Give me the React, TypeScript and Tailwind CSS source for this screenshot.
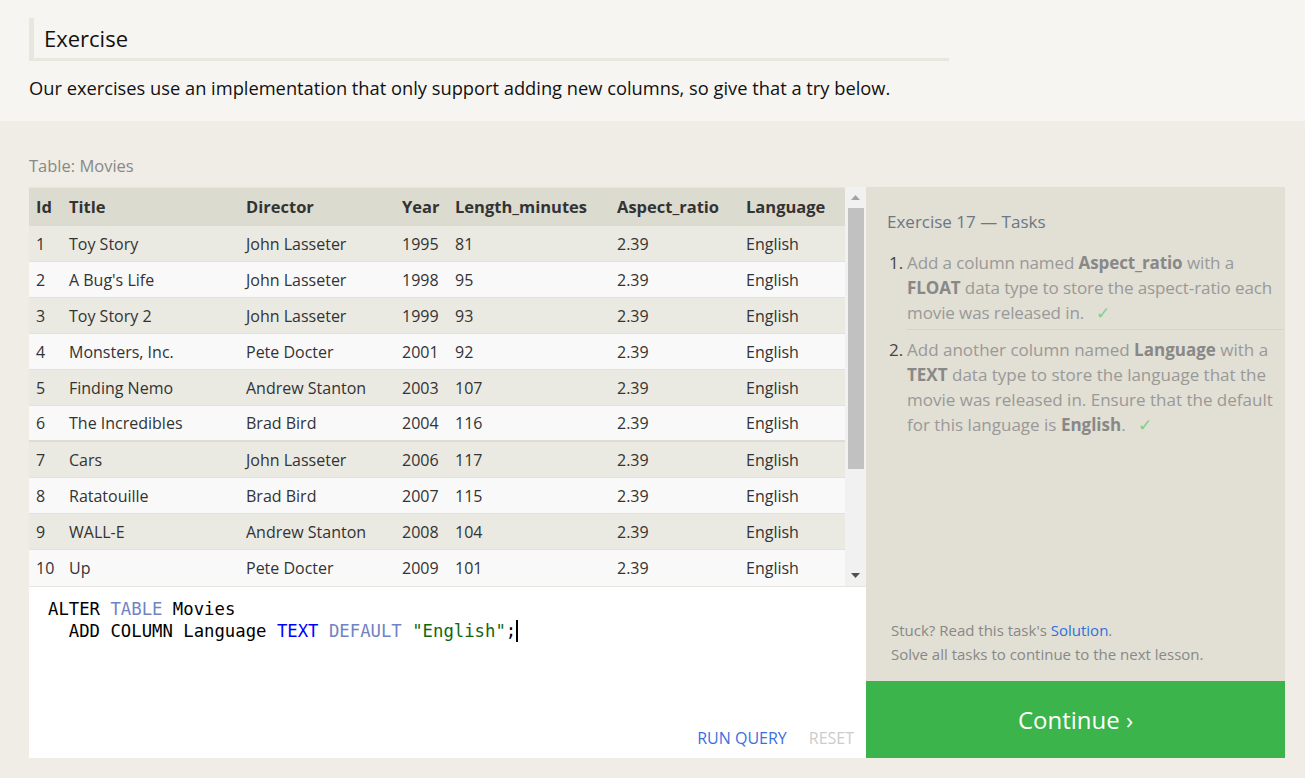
import React from "react";

const rows: [number, string, string, number, number][] = [
  [1, "Toy Story", "John Lasseter", 1995, 81],
  [2, "A Bug's Life", "John Lasseter", 1998, 95],
  [3, "Toy Story 2", "John Lasseter", 1999, 93],
  [4, "Monsters, Inc.", "Pete Docter", 2001, 92],
  [5, "Finding Nemo", "Andrew Stanton", 2003, 107],
  [6, "The Incredibles", "Brad Bird", 2004, 116],
  [7, "Cars", "John Lasseter", 2006, 117],
  [8, "Ratatouille", "Brad Bird", 2007, 115],
  [9, "WALL-E", "Andrew Stanton", 2008, 104],
  [10, "Up", "Pete Docter", 2009, 101],
];

const cols = ["w-[33px]", "w-[177px]", "w-[156px]", "w-[53px]", "w-[162px]", "w-[129px]", "w-[106px]"];

export default function App() {
  return (
    <div className="w-[1305px] h-[778px] overflow-hidden font-['Open_Sans',sans-serif] text-[#222]">
      <div className="bg-[#f6f5f1] h-[121px] pt-[18px] px-[29px]">
        <div className="w-[920px] h-[43px] border-l-[5px] border-b-[3px] border-[#e8e7dd] pl-[10px] text-[22px] leading-[40px] text-[#111]">
          Exercise
        </div>
        <p className="mt-[14px] text-[18.3px] leading-[26px] text-[#111] whitespace-nowrap">
          Our exercises use an implementation that only support adding new columns, so give that a try below.
        </p>
      </div>
      <div className="bg-[#efede6] h-[657px] pt-[34px] pl-[29px] pr-[20px]">
        <div className="text-[16.5px] leading-[22px] text-[#888]">Table: Movies</div>
        <div className="mt-[10px] flex">
          <div className="w-[837px] shrink-0 flex flex-col">
            <div className="h-[399px] flex bg-white">
              <div className="w-[816px] flex flex-col text-[16px] text-[#333]">
                <div className="h-[39px] flex items-center bg-[#dcdbd0] border-t border-[#e6e5dc] font-bold text-[16.5px]">
                  {["Id", "Title", "Director", "Year", "Length_minutes", "Aspect_ratio", "Language"].map((h, i) => (
                    <div key={h} className={`${cols[i]} pl-[7px] whitespace-nowrap`}>{h}</div>
                  ))}
                </div>
                {rows.map((r, idx) => (
                  <div
                    key={r[0]}
                    className={`h-[36px] flex items-center border-b ${idx === 5 ? "border-b-2 border-[#dddcd6]" : "border-[#e2e1da]"} ${idx % 2 === 0 ? "bg-[#eae9e2]" : "bg-[#f9f9f9]"} ${idx === 6 ? "h-[35px]" : ""} ${idx === 9 ? "border-b-0" : ""}`}
                  >
                    <div className={`${cols[0]} pl-[7px]`}>{r[0]}</div>
                    <div className={`${cols[1]} pl-[7px]`}>{r[1]}</div>
                    <div className={`${cols[2]} pl-[7px]`}>{r[2]}</div>
                    <div className={`${cols[3]} pl-[7px]`}>{r[3]}</div>
                    <div className={`${cols[4]} pl-[7px]`}>{r[4]}</div>
                    <div className={`${cols[5]} pl-[7px]`}>2.39</div>
                    <div className={`${cols[6]} pl-[7px]`}>English</div>
                  </div>
                ))}
              </div>
              <div className="w-[21px] bg-[#f1f1f1] flex flex-col items-center">
                <div className="h-[21px] flex items-center justify-center">
                  <svg width="9" height="5" viewBox="0 0 9 5"><path d="M0 5 L4.5 0 L9 5 Z" fill="#a3a3a3" /></svg>
                </div>
                <div className="w-[16px] h-[261px] bg-[#c1c1c1]" />
                <div className="flex-1" />
                <div className="h-[21px] flex items-center justify-center">
                  <svg width="9" height="5" viewBox="0 0 9 5"><path d="M0 0 L4.5 5 L9 0 Z" fill="#505050" /></svg>
                </div>
              </div>
            </div>
            <div className="h-[172px] bg-white border-t border-[#e5e4dd] relative">
              <pre className="pt-[11px] pl-[19px] font-['DejaVu_Sans_Mono',monospace] text-[17.3px] leading-[22px] text-black">
                <span>ALTER </span>
                <span className="text-[#7083c2]">TABLE</span>
                <span> Movies</span>
                {"\n"}
                <span>  ADD COLUMN Language </span>
                <span className="text-[#0000ff]">TEXT</span>
                <span> </span>
                <span className="text-[#7083c2]">DEFAULT</span>
                <span> </span>
                <span className="text-[#116611]">"English"</span>
                <span>;</span>
                <span className="inline-block w-[2px] h-[22px] bg-black align-top" />
              </pre>
              <div className="absolute right-[12px] bottom-[9px] flex gap-[22px] text-[16px] leading-[22px]">
                <span className="text-[#3b6fdf]">RUN QUERY</span>
                <span className="text-[#cccccc]">RESET</span>
              </div>
            </div>
          </div>
          <div className="w-[419px] shrink-0 flex flex-col">
            <div className="h-[494px] bg-[#e2dfd4] pl-[21px] pr-[1px] pt-[23px] pb-[15px] flex flex-col">
              <div className="text-[17px] leading-[24px] text-[#6b7785]">Exercise 17 — Tasks</div>
              <ol className="mt-[16px] text-[17px] leading-[25px] text-[#999]">
                <li className="flex">
                  <span className="w-[20px] pl-[2px] text-[#444]">1.</span>
                  <div className="flex-1 pb-[4px] border-b border-[#d6d3c9] tracking-[-0.1px]">
                    Add a column named <b className="text-[#888]">Aspect_ratio</b> with a <b className="text-[#888]">FLOAT</b> data type to store the aspect-ratio each movie was released in. <span className="ml-[8px] text-[#7fcf8a]">✓</span>
                  </div>
                </li>
                <li className="flex mt-[7px]">
                  <span className="w-[20px] pl-[2px] text-[#444]">2.</span>
                  <div className="flex-1 pr-[3px]">
                    Add another column named <b className="text-[#888]">Language</b> with a <b className="text-[#888]">TEXT</b> data type to store the language that the movie was released in. Ensure that the default for this language is <b className="text-[#888]">English</b>. <span className="ml-[8px] text-[#7fcf8a]">✓</span>
                  </div>
                </li>
              </ol>
              <div className="mt-auto pl-[4px] text-[15px] leading-[24px] text-[#888]">
                <div>
                  Stuck? Read this task's <span className="text-[#2f6fdc]">Solution</span>.
                </div>
                <div>Solve all tasks to continue to the next lesson.</div>
              </div>
            </div>
            <div className="h-[77px] bg-[#3bb44b] flex items-center justify-center text-white text-[24px]">
              Continue ›
            </div>
          </div>
        </div>
      </div>
    </div>
  );
}
